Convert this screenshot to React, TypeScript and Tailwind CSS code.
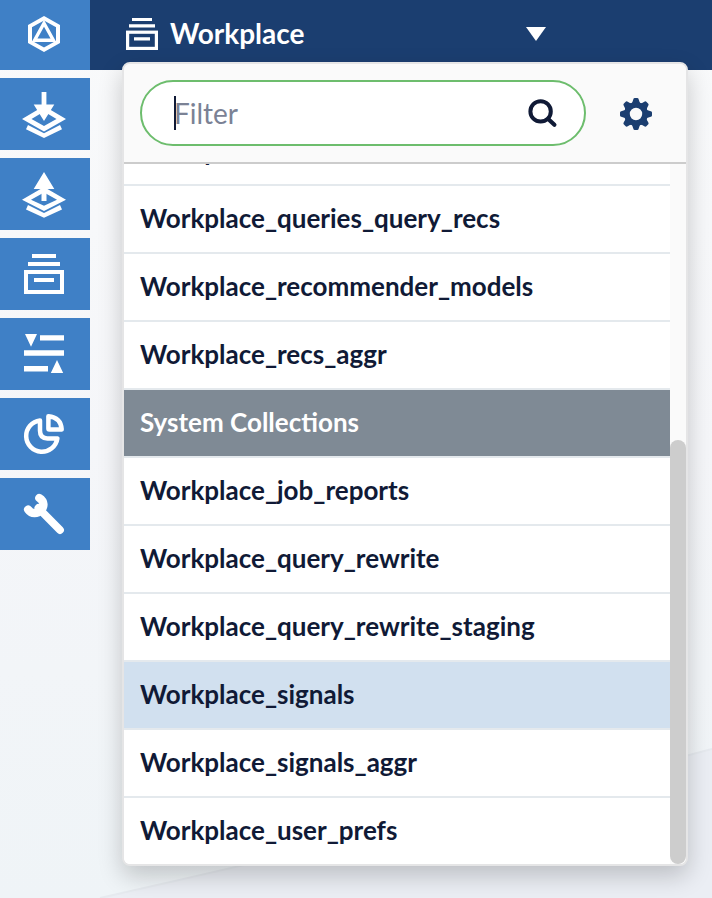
import type { ReactNode } from "react";

const GEAR_TEETH = [0, 45, 90, 135, 180, 225, 270, 315];

function NavIcon({ viewBox, children }: { viewBox: string; children: ReactNode }) {
  return (
    <svg viewBox={viewBox} className="block h-full w-full" fill="none">
      {children}
    </svg>
  );
}

const navItems: { label: string; icon: ReactNode }[] = [
  {
    label: "Import",
    icon: (
      <NavIcon viewBox="0 78 90 72">
        <path
          fill="#fff"
          fillRule="evenodd"
          d="M44 106 L66 119 L44 131.5 L22 119 Z M44 111.5 L31.5 119 L44 126 L56.5 119 Z"
        />
        <path fill="#fff" d="M28 125 L44 133.3 L60 125 L62 129.2 L44 138 L26 129.2 Z" />
        <path fill="#fff" d="M41.6 92 H46.4 V104.6 H54.3 L44 121 L33.7 104.6 H41.6 Z" />
      </NavIcon>
    ),
  },
  {
    label: "Export",
    icon: (
      <NavIcon viewBox="0 158 90 72">
        <path
          fill="#fff"
          fillRule="evenodd"
          d="M44 187 L66 199.7 L44 211 L22 199.7 Z M44 192.5 L31 199.7 L44 205.7 L57 199.7 Z"
        />
        <path fill="#fff" d="M28 205 L44 213 L60 205 L62 209.4 L44 217.8 L26 209.4 Z" />
        <path fill="#fff" d="M44 172 L54.3 189 H46.5 V201 H41.5 V189 H33.7 Z" />
      </NavIcon>
    ),
  },
  {
    label: "Collections",
    icon: (
      <NavIcon viewBox="0 238 90 72">
        <path fill="#fff" d="M32 254h24v4H32z M28 262h32v4H28z M34 278h20v4H34z" />
        <rect x="26" y="272" width="36" height="20" stroke="#fff" strokeWidth="4" />
      </NavIcon>
    ),
  },
  {
    label: "Tuning",
    icon: (
      <NavIcon viewBox="0 318 90 72">
        <path
          fill="#fff"
          d="M25 334h12l-6 12.7z M40 335.2h24v5.3H40z M24 350.3h40v5.5H24z M24 366h24v5.6H24z M57 360l6.2 13h-12.4z"
        />
      </NavIcon>
    ),
  },
  {
    label: "Analytics",
    icon: (
      <NavIcon viewBox="0 398 90 72">
        <g stroke="#fff" strokeWidth="4.5" strokeLinejoin="round">
          <path d="M40 420.4 A15.7 15.7 0 1 0 57.4 438.4 H47.4 Q40 438.4 40 430.8 Z" />
          <path d="M48.4 416.3 Q60.8 417.4 61.7 429.4 H49.4 Q48.4 429.4 48.4 428.4 Z" />
        </g>
      </NavIcon>
    ),
  },
  {
    label: "System",
    icon: (
      <NavIcon viewBox="0 478 90 72">
        <g stroke="#fff" strokeLinecap="round">
          <path strokeWidth="7.8" d="M40 509.8 L60 530" />
          <path strokeWidth="8.2" d="M39.3 498 C44.6 501.3 44.6 506.8 41 510.2 C37.4 514 31.6 514.4 28.1 509.5" />
          <path strokeWidth="8" d="M38.5 508 L40 509.5" />
        </g>
      </NavIcon>
    ),
  },
];

type Row = { text: string; kind?: "heading" | "active" };

const rows: Row[] = [
  { text: "Workplace" },
  { text: "Workplace_queries_query_recs" },
  { text: "Workplace_recommender_models" },
  { text: "Workplace_recs_aggr" },
  { text: "System Collections", kind: "heading" },
  { text: "Workplace_job_reports" },
  { text: "Workplace_query_rewrite" },
  { text: "Workplace_query_rewrite_staging" },
  { text: "Workplace_signals", kind: "active" },
  { text: "Workplace_signals_aggr" },
  { text: "Workplace_user_prefs" },
];

function rowColors(kind?: Row["kind"]) {
  if (kind === "heading") return "bg-[#7f8a95] text-white";
  if (kind === "active") return "bg-[#d1e0ef] text-[#101a36]";
  return "bg-white text-[#101a36]";
}

function CollectionMenu() {
  return (
    <div className="absolute left-[122px] top-[62px] flex h-[804px] w-[566px] flex-col overflow-hidden rounded-lg border-2 border-[#e5e5e6] bg-white shadow-[0_10px_24px_rgba(0,0,0,0.2)]">
      <div className="flex h-[100px] shrink-0 items-center border-b-2 border-[#cccccc] bg-[#fafafa] pl-4">
        <div className="flex h-[66px] w-[446px] items-center rounded-full border-2 border-[#6dbd6d] bg-white pl-8">
          <span className="h-[34px] w-0.5 bg-[#101a36]" />
          <span className="-ml-0.5 grow text-[28px] leading-none text-[#7b8295]">Filter</span>
          <svg viewBox="526 97 32 32" className="mr-[26px] h-8 w-8" fill="none" stroke="#101a36">
            <circle cx="540.6" cy="111.4" r="10.2" strokeWidth="4" />
            <path d="M548.2 119 L554.4 124.8" strokeWidth="4.2" strokeLinecap="round" />
          </svg>
        </div>
        <svg viewBox="-16 -16 32 32" className="ml-[34px] mt-0.5 h-8 w-8" fill="#1b3e70">
          {GEAR_TEETH.map((angle) => (
            <path
              key={angle}
              transform={`rotate(${angle})`}
              d="M-5.2 -10 Q-3.3 -11.4 -2.9 -14 Q-2.6 -16 -1.4 -16 H1.4 Q2.6 -16 2.9 -14 Q3.3 -11.4 5.2 -10 Z"
            />
          ))}
          <circle r="8.9" fill="none" stroke="#1b3e70" strokeWidth="5.4" />
        </svg>
      </div>
      <div className="flex h-[700px]">
        <div className="flex h-full w-[546px] flex-col justify-end overflow-hidden">
          {rows.map((row, i) => (
            <div
              key={row.text}
              className={`flex shrink-0 items-center pl-4 text-[26px] font-bold leading-none ${
                i === 0 ? "" : "pb-0.5"
              } ${
                i === rows.length - 1 ? "h-[66px]" : "h-[68px] border-b-2 border-[#e4e9ed]"
              } ${rowColors(row.kind)}`}
            >
              {row.text}
            </div>
          ))}
        </div>
        <div className="flex w-4 flex-col justify-end bg-[#fafafa]">
          <div className="h-[424px] rounded-full bg-[#cdcdcd]" />
        </div>
      </div>
    </div>
  );
}

export default function App() {
  return (
    <div className="relative h-[898px] w-[712px] overflow-hidden bg-linear-to-b from-[#f9fafb] via-[#f5f6f9] to-[#eff4f7] font-['Lato',sans-serif]">
      <svg viewBox="0 0 712 898" className="absolute inset-0 h-full w-full">
        <path d="M100 898 Q430 824 712 749 V898 Z" fill="#ebeef4" />
        <path d="M100 898 Q430 824 712 749" fill="none" stroke="#e6eaef" strokeWidth="2" />
      </svg>
      <div className="relative flex">
        <nav className="flex w-[90px] flex-col gap-2">
          <div className="h-[70px] bg-[#3f80c6]">
            <NavIcon viewBox="0 0 90 70">
              <path d="M44 18.3 L58 26.1 V41.9 L44 49.7 L30 41.9 V26.1 Z" stroke="#fff" strokeWidth="4" />
              <path d="M44 23.2 L53.4 40.2 H34.6 Z" stroke="#fff" strokeWidth="3.4" />
            </NavIcon>
          </div>
          {navItems.map((item) => (
            <div key={item.label} className="h-[72px] bg-[#3f80c6]">
              {item.icon}
            </div>
          ))}
        </nav>
        <header className="flex h-[70px] grow items-center bg-[#1b3e70] pb-0.5 pl-9">
          <svg viewBox="126 18 32 32" className="h-8 w-8" fill="none">
            <path fill="#fff" d="M132 18h20v3.1h-20z M129 24.3h26v3.1h-26z M134 37.2h16v3.2h-16z" />
            <rect x="127.6" y="32.2" width="28.8" height="16.2" stroke="#fff" strokeWidth="3.2" />
          </svg>
          <span className="ml-3 pb-0.5 text-[28px] font-bold leading-none text-white">Workplace</span>
          <svg viewBox="0 0 20 14" className="ml-auto mr-[166px] h-3.5 w-5">
            <path d="M0 0 H20 L10 14 Z" fill="#fff" />
          </svg>
        </header>
      </div>
      <CollectionMenu />
    </div>
  );
}
